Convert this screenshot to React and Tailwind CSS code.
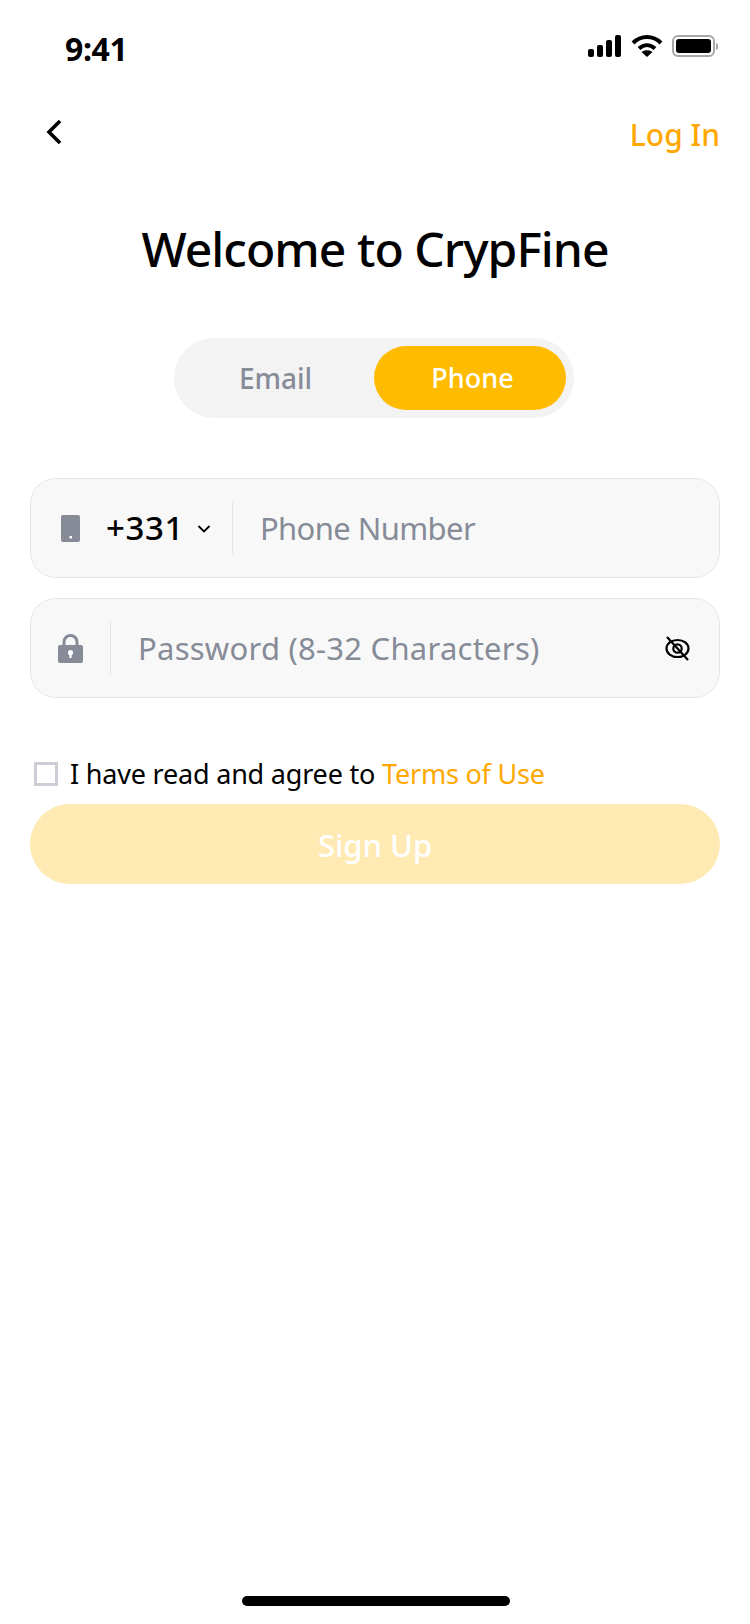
export default function App() {
  return (
    <div className="w-[750px] h-[1624px] bg-white flex flex-col overflow-hidden text-black" style={{ fontFamily: '"Noto Sans", sans-serif' }}>
      <div className="h-[100px] flex justify-between items-start pl-[65px] pr-[32px] shrink-0">
        <span className="mt-[31px] text-[32px] leading-[36px] font-bold tracking-[-0.4px]">9:41</span>
        <div className="mt-[34px] flex items-center gap-[9px]">
          <svg width="35" height="24" viewBox="0 0 35 24"><rect x="1" y="15" width="6" height="8" rx="2" /><rect x="10" y="11" width="6" height="12" rx="2" /><rect x="19" y="6" width="6" height="17" rx="2" /><rect x="28" y="1" width="6" height="22" rx="2" /></svg>
          <svg width="32" height="24" viewBox="0 0 32 24" fill="none" stroke="black" strokeWidth="4"><path d="M2 9 C10 1 22 1 30 9" /><path d="M8 14.5 C13 10 19 10 24 14.5" /><path d="M16 23 L10.5 18 C13.5 15.5 18.5 15.5 21.5 18 Z" fill="black" stroke="none" /></svg>
          <div className="flex items-center">
            <div className="w-[43px] h-[22px] rounded-[6px] border-2 border-[#a8a8a8] p-[2px]"><div className="w-full h-full bg-black rounded-[3px]" /></div>
            <div className="w-[2px] h-[7px] bg-[#a8a8a8] rounded-r-full ml-[1px]" />
          </div>
        </div>
      </div>
      <div className="h-[60px] flex justify-between items-start pl-[44px] pr-[30px] shrink-0">
        <svg className="mt-[18px]" width="20" height="28" viewBox="0 0 20 28" fill="none" stroke="black" strokeWidth="3.6"><path d="M16 3 L5 14 L16 25" /></svg>
        <span className="mt-[14px] text-[30px] leading-[42px] font-medium text-[#ffa800]">Log In</span>
      </div>
      <h1 className="mt-[60px] text-center text-[48px] leading-[58px] font-medium tracking-[-0.95px]">Welcome to CrypFine</h1>
      <div className="mt-[60px] ml-[174px] w-[400px] h-[80px] rounded-full bg-[#f3f3f4] flex items-center pl-[8px] pr-[8px] gap-[8px] text-[28px] font-medium">
        <div className="w-[184px] text-center text-[#868b97] pl-[3px]">Email</div>
        <div className="w-[192px] h-[64px] rounded-full bg-[#ffbb00] text-white flex items-center justify-center pl-[5px] text-[27px]">Phone</div>
      </div>
      <div className="mt-[60px] mx-[30px] flex flex-col gap-[20px]">
        <div className="h-[100px] rounded-[26px] bg-[#f8f8f8] border border-[#e6e6e8] flex items-center pl-[30px]">
          <svg width="19" height="27" viewBox="0 0 19 27"><rect width="19" height="27" rx="2" fill="#868b97" /><rect x="8.5" y="21" width="2.5" height="2.5" fill="white" /></svg>
          <span className="ml-[26px] text-[33px] font-medium tracking-[0.6px]">+331</span>
          <svg className="ml-[13px] mt-[1px]" width="14" height="10" viewBox="0 0 14 10" fill="none" stroke="black" strokeWidth="1.8"><path d="M1.5 2 L7 7.5 L12.5 2" /></svg>
          <div className="ml-[21px] w-px h-[52px] bg-[#e6e6e8]" />
          <span className="ml-[27px] text-[31px] text-[#868b97] tracking-[-0.6px]">Phone Number</span>
        </div>
        <div className="h-[100px] rounded-[26px] bg-[#f8f8f8] border border-[#e6e6e8] flex items-center pl-[27px] pr-[28px]">
          <svg width="25" height="29" viewBox="0 0 25 29"><path d="M6 13 V8 A6.5 6.5 0 0 1 19 8 V13" fill="none" stroke="#868b97" strokeWidth="3" /><rect y="11" width="25" height="18" rx="2" fill="#868b97" /><circle cx="12.5" cy="18.5" r="2.6" fill="white" /><rect x="11.4" y="19" width="2.2" height="5" fill="white" /></svg>
          <div className="ml-[27px] w-px h-[52px] bg-[#e6e6e8]" />
          <span className="ml-[27px] text-[31px] text-[#868b97] tracking-[0.25px]">Password (8-32 Characters)</span>
          <svg className="ml-auto" width="27" height="25" viewBox="0 0 27 25" fill="none" stroke="black" strokeWidth="2.2"><ellipse cx="13.5" cy="12.5" rx="11" ry="8.5" /><circle cx="13.5" cy="12.5" r="4.2" /><path d="M3 1 L24 24" /></svg>
        </div>
      </div>
      <div className="mt-[61px] ml-[34px] flex items-center h-[30px]">
        <div className="w-[24px] h-[24px] border-[3px] border-[#cdced5] bg-white" />
        <span className="ml-[12px] text-[27px] leading-[30px] whitespace-nowrap tracking-[-0.2px]">I have read and agree to <span className="text-[#ffa800]">Terms of Use</span></span>
      </div>
      <button className="mt-[15px] mx-[30px] h-[80px] pt-[3px] rounded-full bg-[#ffeab3] text-white text-[31px] font-medium">Sign Up</button>
      <div className="mt-auto mb-[18px] ml-[242px] w-[268px] h-[10px] rounded-full bg-black" />
    </div>
  );
}
